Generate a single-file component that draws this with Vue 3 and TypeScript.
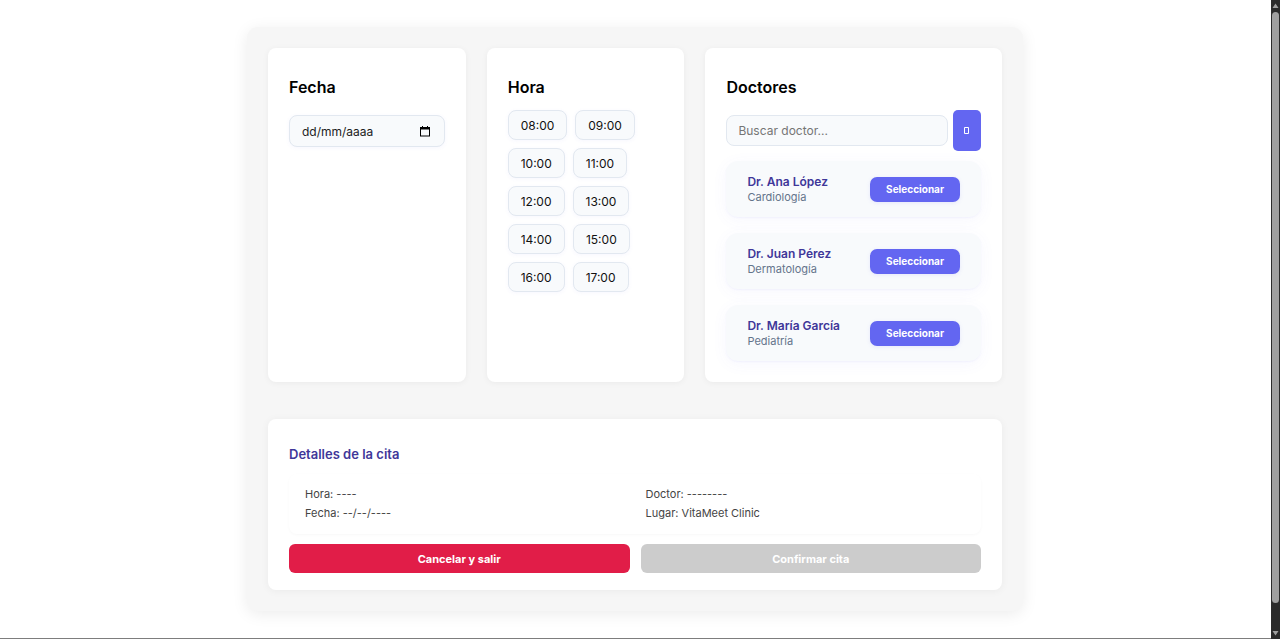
<script setup lang="ts">
import { computed, ref } from 'vue'

interface Doctor {
  name: string
  specialty: string
}

const hours: string[] = [
  '08:00', '09:00', '10:00', '11:00', '12:00',
  '13:00', '14:00', '15:00', '16:00', '17:00',
]

const doctors: Doctor[] = [
  { name: 'Dr. Ana López', specialty: 'Cardiología' },
  { name: 'Dr. Juan Pérez', specialty: 'Dermatología' },
  { name: 'Dr. María García', specialty: 'Pediatría' },
]

const date = ref('')
const search = ref('')
const hour = ref('')
const doctor = ref('')

const visibleDoctors = computed(() =>
  doctors.filter((d) => d.name.toLowerCase().includes(search.value.toLowerCase())),
)
const ready = computed(() => Boolean(date.value && hour.value && doctor.value))

function reset(): void {
  date.value = ''
  hour.value = ''
  doctor.value = ''
}
</script>

<template>
  <div class="page">
    <main class="booking">
      <div class="columns">
        <section class="card">
          <h2><label for="date">Fecha</label></h2>
          <div class="date-field">
            <input id="date" v-model="date" type="text" placeholder="dd/mm/aaaa" />
            <button type="button" aria-label="Abrir calendario">
              <svg viewBox="0 0 10 11" width="10" height="11" aria-hidden="true">
                <path d="M0 1h2V0h1v1h4V0h1v1h2v9.500H0zM1 3.500v6h8v-6z" fill="#000" fill-rule="evenodd" />
              </svg>
            </button>
          </div>
        </section>

        <section class="card">
          <h2>Hora</h2>
          <div class="hours">
            <button
              v-for="h in hours"
              :key="h"
              type="button"
              :class="{ active: hour === h }"
              @click="hour = h"
            >{{ h }}</button>
          </div>
        </section>

        <section class="card">
          <h2>Doctores</h2>
          <form class="search" @submit.prevent>
            <input v-model="search" type="text" placeholder="Buscar doctor..." aria-label="Buscar doctor" />
            <button type="submit" aria-label="Buscar">
              <svg viewBox="0 0 5 7" width="5" height="7" aria-hidden="true">
                <path d="M.5.5h4v6h-4z" fill="none" stroke="#fff" />
              </svg>
            </button>
          </form>
          <ul class="doctors">
            <li v-for="d in visibleDoctors" :key="d.name">
              <div>
                <strong>{{ d.name }}</strong>
                <span>{{ d.specialty }}</span>
              </div>
              <button type="button" @click="doctor = d.name">Seleccionar</button>
            </li>
          </ul>
        </section>
      </div>

      <section class="details">
        <h3>Detalles de la cita</h3>
        <div class="summary">
          <p>Hora: {{ hour || '----' }}</p>
          <p>Doctor: {{ doctor || '--------' }}</p>
          <p>Fecha: {{ date || '--/--/----' }}</p>
          <p>Lugar: VitaMeet Clinic</p>
        </div>
        <div class="actions">
          <button type="button" class="cancel" @click="reset">Cancelar y salir</button>
          <button type="button" class="confirm" :disabled="!ready">Confirmar cita</button>
        </div>
      </section>
    </main>

    <div class="scrollbar" aria-hidden="true">
      <svg viewBox="0 0 9 9" width="9" height="9"><path d="M4.5 2.5 7.5 7h-6z" fill="#9f9f9f" /></svg>
      <div class="thumb"></div>
      <svg viewBox="0 0 9 9" width="9" height="9"><path d="M4.5 6.5 7.5 2h-6z" fill="#9f9f9f" /></svg>
    </div>
  </div>
</template>

<style>
body {
  background: #fff;
}
</style>

<style scoped>
* {
  box-sizing: border-box;
}

.page {
  display: flex;
  justify-content: center;
  min-height: 100vh;
  padding: 27px 10px 27px 0;
  border-bottom: 1px solid #7d7d7d;
  font-family: Inter, "Liberation Sans", sans-serif;
  font-size: 12px;
  color: #000;
}

button,
input {
  font: inherit;
}

button {
  cursor: pointer;
}

.booking {
  width: 100%;
  max-width: 776px;
  padding: 21px;
  border-radius: 11px;
  background: #f6f6f6;
  box-shadow: 0 3px 16px rgba(0, 0, 0, 0.08);
}

.columns {
  display: grid;
  grid-template-columns: 2fr 2fr 3fr;
  gap: 21px;
}

.card {
  min-width: 0;
  padding: 28px 21px 21px;
  border-radius: 8px;
  background: #fff;
  box-shadow: 0 1px 6px rgba(0, 0, 0, 0.05);
}

h2 {
  margin: 0 0 12px;
  font-size: 16px;
  line-height: 22px;
  font-weight: 600;
}

.date-field {
  display: flex;
  align-items: center;
  height: 32px;
  margin-top: 17px;
  padding: 0 14px 0 12px;
  border: 1px solid #e2e8f0;
  border-radius: 8px;
  background: #f8fafc;
  box-shadow: 0 1px 4px rgba(99, 102, 241, 0.06);
}

.date-field input {
  flex: 1;
  min-width: 0;
  padding: 0;
  border: 0;
  outline: 0;
  background: none;
}

.date-field input::placeholder {
  color: #222;
}

.date-field button {
  display: flex;
  padding: 0;
  border: 0;
  background: none;
}

.hours {
  display: flex;
  flex-wrap: wrap;
  gap: 8px;
}

.hours button {
  height: 30px;
  padding: 0 12px;
  border: 1px solid #e2e8f0;
  border-radius: 8px;
  background: #f8fafc;
  color: #111;
  box-shadow: 0 1px 4px rgba(99, 102, 241, 0.05);
}

.hours .active {
  border-color: #6366f1;
}

.search {
  display: flex;
  align-items: center;
  gap: 5px;
}

.search input {
  flex: 1;
  min-width: 0;
  height: 31px;
  padding: 0 11px;
  border: 1px solid #e2e8f0;
  border-radius: 8px;
  background: #f8fafc;
}

.search input::placeholder {
  color: #757575;
}

.search button {
  display: flex;
  align-items: center;
  justify-content: center;
  width: 28px;
  height: 41px;
  padding: 0;
  border: 0;
  border-radius: 5px;
  background: #6366f1;
}

.doctors {
  display: grid;
  gap: 16px;
  margin: 10px 0 0;
  padding: 0;
  list-style: none;
}

.doctors li {
  display: flex;
  align-items: center;
  justify-content: space-between;
  height: 56px;
  padding: 0 21px;
  border-radius: 12px;
  background: #f8fafc;
  box-shadow: 0 1px 2px rgba(99, 102, 241, 0.06), 0 3px 16px rgba(99, 102, 241, 0.05);
}

.doctors strong,
.doctors span {
  display: block;
}

.doctors strong {
  font-size: 12px;
  line-height: 16px;
  font-weight: 600;
  color: #3f3799;
}

.doctors span {
  font-size: 11px;
  line-height: 15px;
  color: #64748b;
}

.doctors button {
  height: 25px;
  padding: 0 16px;
  border: 0;
  border-radius: 7px;
  background: #6366f1;
  color: #fff;
  font-size: 10px;
  font-weight: 700;
  box-shadow: 0 1px 4px rgba(99, 102, 241, 0.12);
}

.details {
  margin-top: 37px;
  padding: 25px 21px 17px;
  border-radius: 8px;
  background: #fff;
  box-shadow: 0 1px 8px rgba(0, 0, 0, 0.05);
}

h3 {
  margin: 0 0 10px;
  font-size: 13px;
  line-height: 20px;
  font-weight: 600;
  color: #3f3799;
}

.summary {
  display: grid;
  grid-template-columns: 1fr 1fr;
  column-gap: 21px;
  padding: 11px 16px;
  border-radius: 8px;
  box-shadow: 0 1px 3px rgba(0, 0, 0, 0.03);
}

.summary p {
  margin: 0;
  font-size: 11px;
  line-height: 19px;
  color: #444;
}

.actions {
  display: grid;
  grid-template-columns: 1fr 1fr;
  gap: 11px;
  margin-top: 10px;
}

.actions button {
  height: 29px;
  border: 0;
  border-radius: 6px;
  color: #fff;
  font-size: 11px;
  font-weight: 700;
}

.cancel {
  background: #e11d48;
}

.confirm {
  background: #ccc;
}

.scrollbar {
  position: fixed;
  top: 0;
  right: 0;
  bottom: 0;
  display: flex;
  flex-direction: column;
  width: 9px;
  padding: 1px 0;
  background: #2b2b2b;
}

.scrollbar svg {
  display: block;
  flex: none;
}

.thumb {
  flex: 1;
  margin: 2px 1px 26px;
  border-radius: 4px;
  background: #9f9f9f;
}
</style>
